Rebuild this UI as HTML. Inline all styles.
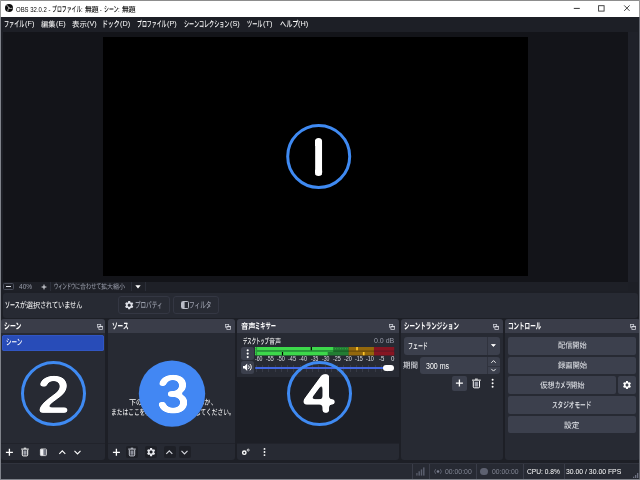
<!DOCTYPE html>
<html lang="ja"><head><meta charset="utf-8"><title>OBS 32.0.2 - プロファイル: 無題 - シーン: 無題</title>
<style>
html,body{margin:0;padding:0;background:#1d1f26;}
body{width:640px;height:480px;position:relative;overflow:hidden;font-family:"Liberation Sans","Noto Sans CJK JP",sans-serif;color:#fefefe;font-size:8px;}
.a{position:absolute;white-space:nowrap;}
.t{position:absolute;white-space:pre;line-height:12px;height:12px;transform-origin:0 50%;text-rendering:geometricPrecision;}
.o{display:inline-block;vertical-align:baseline;height:12px;}
.i{display:inline-block;transform-origin:0 50%;}
svg{position:absolute;overflow:visible;}
#title{left:0;top:0;width:640px;height:16.500px;background:#fff;border-top:1px solid #8d8d8d;box-sizing:border-box;}
#pv{left:3px;top:31.800px;width:625px;height:249.800px;background:#131419;}
#black{left:103.100px;top:37.200px;width:424.700px;height:238.900px;background:#000;}
#vsb{left:628px;top:32px;width:9.5px;height:249.5px;background:#1f2129;}
#hsb{left:3px;top:281.5px;width:625px;height:9px;background:#1e2027;}
#srcbar{left:2.5px;top:292.5px;width:635.5px;height:25.5px;background:#272a33;border-radius:3px;}
.dock{position:absolute;top:319px;height:141px;background:#272a33;border-radius:3px;overflow:hidden;}
.dock .hd{position:absolute;left:0;top:0;right:0;height:14.300px;background:#3a3d49;}
.dock .tb{position:absolute;left:0;right:0;top:124px;height:1px;background:#21232b;}
#status{left:0;top:463px;width:640px;height:17px;background:#272a33;border-top:1px solid #30333d;box-sizing:border-box;}
.btn{position:absolute;background:#3c404d;border-radius:2px;}
.dbtn{position:absolute;background:#282b34;border:1px solid #343743;border-radius:3px;box-sizing:border-box;}
.sep{position:absolute;top:464px;width:1px;height:15px;background:#3a3d49;}
.fl{position:absolute;top:323.5px;width:6px;height:6px;}
.num{font-family:"Liberation Sans",sans-serif;font-weight:400;fill:#fff;stroke:#fff;stroke-linejoin:round;stroke-linecap:round;}
</style></head><body>
<div id="title" class="a"></div>
<!-- OBS logo -->
<svg style="left:5.200px;top:4.100px" width="8" height="8" viewBox="0 0 18 18"><circle cx="9" cy="9" r="9" fill="#0c0c0c"/><g fill="none" stroke="#fff" stroke-width="1.500" stroke-linecap="round"><path d="M4 3.200Q8.500 5 9 9"/><path d="M9 9Q12 11.500 15.800 9.800"/><path d="M9 9Q6 11 6.200 16"/></g></svg>
<!-- window buttons -->
<svg style="left:570px;top:1px" width="70" height="16" viewBox="0 0 70 16"><path d="M3.800 7.400h6" stroke="#333" stroke-width="1" fill="none"/><rect x="28.600" y="4.700" width="5.500" height="5.400" fill="none" stroke="#333" stroke-width=".900"/><path d="M54.200 4.400l5.400 5.500M59.600 4.400l-5.400 5.500" stroke="#333" stroke-width=".900" fill="none"/></svg>

<div id="pv" class="a"></div>
<div id="black" class="a"></div>
<div id="vsb" class="a"></div>
<div id="hsb" class="a"></div>
<!-- zoom bar -->
<div class="a" style="left:3px;top:283px;width:10.5px;height:7px;border:1px solid #4a4e5b;border-radius:1.5px;box-sizing:border-box;"></div>
<div class="a" style="left:6px;top:286.100px;width:4.500px;height:1px;background:#e2e4ea;"></div>
<svg style="left:40.5px;top:283.5px" width="6" height="6" viewBox="0 0 6 6"><path d="M3 .6v4.800M.6 3h4.800" stroke="#e2e4ea" stroke-width="1" fill="none"/></svg>
<div class="a" style="left:49.5px;top:282px;width:1px;height:8.5px;background:#2b2e38;"></div>
<div class="a" style="left:131px;top:282px;width:1px;height:8.5px;background:#2b2e38;"></div>
<div class="a" style="left:144.500px;top:282px;width:1px;height:8.5px;background:#2b2e38;"></div>
<svg style="left:135px;top:284.5px" width="6" height="4" viewBox="0 0 6 4"><path d="M.3 .3h5.400L3 3.600z" fill="#fefefe"/></svg>

<div id="srcbar" class="a"></div>
<div class="dbtn" style="left:118px;top:296px;width:51.5px;height:17.5px;"></div>
<div class="dbtn" style="left:172.500px;top:296px;width:46.5px;height:17.5px;"></div>
<!-- gear (properties) -->
<svg style="left:123.550px;top:299.800px" width="10.400" height="10.400" viewBox="0 0 24 24"><path fill="#dfe1e8" d="M19.140 12.940c.040-.300.060-.610.060-.940s-.020-.640-.070-.940l2.030-1.580a.490.490 0 0 0 .120-.610l-1.920-3.320a.488.488 0 0 0-.590-.220l-2.390.960c-.500-.380-1.030-.700-1.620-.940l-.360-2.540a.484.484 0 0 0-.480-.410h-3.840c-.240 0-.430.170-.470.410l-.360 2.540c-.590.240-1.130.570-1.620.940l-2.390-.960c-.220-.080-.470 0-.590.220L2.740 8.870c-.120.210-.080.470.120.610l2.030 1.580c-.050.300-.090.630-.090.940s.020.640.070.940l-2.030 1.580a.490.490 0 0 0-.120.610l1.920 3.320c.120.220.370.290.590.220l2.390-.960c.500.380 1.030.700 1.620.940l.360 2.540c.050.240.240.410.480.410h3.840c.240 0 .440-.170.470-.410l.360-2.540c.590-.240 1.130-.560 1.620-.940l2.390.960c.220.080.470 0 .590-.220l1.920-3.320c.120-.220.070-.470-.120-.610l-2.010-1.580zM12 15.600c-1.980 0-3.600-1.620-3.600-3.600s1.620-3.600 3.600-3.600 3.600 1.620 3.600 3.600-1.620 3.600-3.600 3.600z"/></svg>
<!-- filter icon -->
<svg style="left:180.500px;top:301px" width="8" height="8" viewBox="0 0 8 8"><rect x=".5" y=".5" width="7" height="7" rx="1" fill="none" stroke="#b9bcc7" stroke-width="1"/><rect x="1" y="1" width="2.600" height="6" fill="#b9bcc7"/></svg>

<!-- docks -->
<div class="dock" id="d1" style="left:1.100px;width:104.400px;"><div class="hd"></div><div class="tb"></div></div>
<div class="dock" id="d2" style="left:108px;width:126.500px;"><div class="hd"></div><div class="tb"></div></div>
<div class="dock" id="d3" style="left:236.500px;width:162.500px;"><div class="hd"></div><div class="a" style="left:0;right:0;top:57.500px;bottom:17px;background:#1d1f26;"></div><div class="tb"></div></div>
<div class="dock" id="d4" style="left:401px;width:101.500px;"><div class="hd"></div></div>
<div class="dock" id="d5" style="left:504.500px;width:135px;"><div class="hd"></div></div>

<!-- float icons -->
<svg class="fl" style="left:96.500px" viewBox="0 0 6 6"><rect x=".400" y=".400" width="3.300" height="2.800" fill="none" stroke="#c9ccd4" stroke-width=".750"/><rect x="1.900" y="2.300" width="3.700" height="3.200" fill="#3a3d49" stroke="#d6d8df" stroke-width=".750"/><path d="M1.900 2.700h3.700" stroke="#e6e7ec" stroke-width="1"/></svg>
<svg class="fl" style="left:225px" viewBox="0 0 6 6"><rect x=".400" y=".400" width="3.300" height="2.800" fill="none" stroke="#c9ccd4" stroke-width=".750"/><rect x="1.900" y="2.300" width="3.700" height="3.200" fill="#3a3d49" stroke="#d6d8df" stroke-width=".750"/><path d="M1.900 2.700h3.700" stroke="#e6e7ec" stroke-width="1"/></svg>
<svg class="fl" style="left:389px" viewBox="0 0 6 6"><rect x=".400" y=".400" width="3.300" height="2.800" fill="none" stroke="#c9ccd4" stroke-width=".750"/><rect x="1.900" y="2.300" width="3.700" height="3.200" fill="#3a3d49" stroke="#d6d8df" stroke-width=".750"/><path d="M1.900 2.700h3.700" stroke="#e6e7ec" stroke-width="1"/></svg>
<svg class="fl" style="left:493px" viewBox="0 0 6 6"><rect x=".400" y=".400" width="3.300" height="2.800" fill="none" stroke="#c9ccd4" stroke-width=".750"/><rect x="1.900" y="2.300" width="3.700" height="3.200" fill="#3a3d49" stroke="#d6d8df" stroke-width=".750"/><path d="M1.900 2.700h3.700" stroke="#e6e7ec" stroke-width="1"/></svg>
<svg class="fl" style="left:630px" viewBox="0 0 6 6"><rect x=".400" y=".400" width="3.300" height="2.800" fill="none" stroke="#c9ccd4" stroke-width=".750"/><rect x="1.900" y="2.300" width="3.700" height="3.200" fill="#3a3d49" stroke="#d6d8df" stroke-width=".750"/><path d="M1.900 2.700h3.700" stroke="#e6e7ec" stroke-width="1"/></svg>

<!-- scene list selected -->
<div class="a" style="left:2.100px;top:334.800px;width:102px;height:16.300px;background:#284cb8;border-radius:2.500px;box-shadow:inset 0 0 0 .800px #3459c6;"></div>

<!-- dock 1 toolbar icons -->
<svg style="left:0;top:444px" width="110" height="17" viewBox="0 0 110 17">
<path d="M9.400 4.800v7M5.900 8.300h7" stroke="#fefefe" stroke-width="1.300" fill="none"/>
<path d="M21.20 5.10h7.6M23.80 4.20h2.4" stroke="#fefefe" stroke-width="1" fill="none"/><path d="M22.30 5.90v5a1 1 0 0 0 1 1h3.4a1 1 0 0 0 1-1v-5" fill="none" stroke="#fefefe" stroke-width="1"/><rect x="23.50" y="6.50" width="3" height="4.2" fill="#9a9da8"/>
<rect x="40.400" y="5" width="6" height="6.600" rx=".8" fill="none" stroke="#fefefe" stroke-width=".800"/><rect x="40.600" y="5.200" width="2.600" height="6.200" fill="#f0f1f4"/><rect x="43.200" y="5.400" width="1.400" height="5.800" fill="#b4b7c0"/><rect x="44.600" y="5.400" width="1.400" height="5.800" fill="#6e7180"/>
<path d="M59.300 9.800l3-3 3 3" stroke="#fefefe" stroke-width="1.100" fill="none"/>
<path d="M74.500 6.900l3 3 3-3" stroke="#fefefe" stroke-width="1.100" fill="none"/>
</svg>

<!-- dock 2 toolbar icons -->
<div class="a" style="left:126px;top:446.200px;width:12px;height:11.400px;background:#1e2027;border-radius:2px;"></div>
<div class="a" style="left:144.8px;top:446.200px;width:12px;height:11.400px;background:#1e2027;border-radius:2px;"></div>
<div class="a" style="left:163.5px;top:446.200px;width:12px;height:11.400px;background:#1e2027;border-radius:2px;"></div>
<div class="a" style="left:178.7px;top:446.200px;width:12px;height:11.400px;background:#1e2027;border-radius:2px;"></div>
<svg style="left:107px;top:444px" width="110" height="17" viewBox="0 0 110 17">
<path d="M9.400 4.800v7M5.900 8.300h7" stroke="#fefefe" stroke-width="1.300" fill="none"/>
<path d="M21.20 5.10h7.6M23.80 4.20h2.4" stroke="#c9ccd5" stroke-width="1" fill="none"/><path d="M22.30 5.90v5a1 1 0 0 0 1 1h3.4a1 1 0 0 0 1-1v-5" fill="none" stroke="#c9ccd5" stroke-width="1"/><rect x="23.50" y="6.50" width="3" height="4.2" fill="#8b8e99"/>
<path d="M59.300 9.800l3-3 3 3" stroke="#d6d8df" stroke-width="1.100" fill="none"/>
<path d="M74.500 6.900l3 3 3-3" stroke="#d6d8df" stroke-width="1.100" fill="none"/>
</svg>
<svg style="left:145.800px;top:446.800px" width="10.200" height="10.200" viewBox="0 0 24 24"><path fill="#e8e9ee" d="M19.140 12.940c.040-.300.060-.610.060-.940s-.020-.640-.070-.940l2.030-1.580a.490.490 0 0 0 .120-.610l-1.920-3.320a.488.488 0 0 0-.590-.220l-2.390.960c-.500-.380-1.030-.700-1.620-.940l-.360-2.540a.484.484 0 0 0-.480-.410h-3.840c-.240 0-.430.170-.470.410l-.360 2.540c-.590.240-1.130.570-1.620.940l-2.390-.960c-.220-.080-.470 0-.590.220L2.740 8.870c-.120.210-.080.470.120.610l2.030 1.580c-.050.300-.090.630-.090.940s.020.640.070.940l-2.030 1.580a.490.490 0 0 0-.120.610l1.920 3.320c.120.220.370.290.590.220l2.390-.960c.500.380 1.030.700 1.620.940l.360 2.540c.050.240.240.410.480.410h3.840c.240 0 .440-.170.470-.410l.360-2.540c.590-.240 1.130-.560 1.620-.940l2.390.960c.220.080.470 0 .590-.220l1.920-3.320c.120-.220.070-.470-.120-.610l-2.010-1.580zM12 15.600c-1.980 0-3.600-1.620-3.600-3.600s1.620-3.600 3.600-3.600 3.600 1.620 3.600 3.600-1.620 3.600-3.600 3.600z"/></svg>


<!-- mixer -->
<div class="btn" style="left:240.900px;top:346.700px;width:13.100px;height:13.300px;border-radius:2.500px;"></div>
<div class="btn" style="left:240.900px;top:361.400px;width:13.100px;height:12.900px;border-radius:2.500px;"></div>
<svg style="left:240.900px;top:346.700px" width="13.100" height="13.300" viewBox="0 0 13.100 13.300"><circle cx="6.700" cy="3.200" r="1.050" fill="#fefefe"/><circle cx="6.700" cy="6.600" r="1.050" fill="#fefefe"/><circle cx="6.700" cy="10.100" r="1.050" fill="#fefefe"/></svg>
<svg style="left:240.900px;top:361.400px" width="13.100" height="12.900" viewBox="0 0 13.100 12.900"><path d="M2 4.900h1.700l2.500-2.400v7.500l-2.500-2.400H2z" fill="#fefefe"/><path d="M7.400 4.400a2.500 2.500 0 0 1 0 3.600M8.900 3a4.400 4.400 0 0 1 0 6.400" stroke="#fefefe" stroke-width=".950" fill="none"/></svg>
<!-- meter -->
<svg style="left:254.800px;top:346.650px" width="139.200" height="8.300" viewBox="0 0 139.200 8.300">
<rect x="0" y="0" width="93.700" height="8.300" fill="#1b6529"/><rect x="93.700" y="0" width="25.300" height="8.300" fill="#75520a"/><rect x="119" y="0" width="20.200" height="8.300" fill="#6c1624"/>
<rect x="0" y="0" width="93.700" height="3.300" fill="#227d33"/><rect x="93.700" y="0" width="25.300" height="3.300" fill="#94680c"/><rect x="119" y="0" width="20.200" height="3.300" fill="#861522"/>
<rect x="0" y="5" width="93.700" height="3.300" fill="#227d33"/><rect x="93.700" y="5" width="25.300" height="3.300" fill="#94680c"/><rect x="119" y="5" width="20.200" height="3.300" fill="#861522"/>
<rect x="2" y="0" width="76.200" height="3.300" fill="#3dd84b"/><rect x="2" y="5" width="70.700" height="3.300" fill="#3dd84b"/>
<rect x="2" y="3.300" width="76.200" height="1.700" fill="#2a9c3c"/>
<rect x="55.700" y="0" width="1.200" height="3.300" fill="#000"/><rect x="26.900" y="5" width="1.200" height="3.300" fill="#000"/>
<rect x="101.200" y="0" width="1.700" height="3.300" fill="#ffc62a"/><rect x="107.900" y="5" width="1.700" height="3.300" fill="#ffc62a"/>
<path d="M80 1.700h13" stroke="#4be05a" stroke-width=".600" stroke-dasharray=".800 1.700"/>
<rect x="0" y="0" width="2" height="8.300" fill="#2a9c3c"/><path d="M.500 0v8.300" stroke="#3dd84b" stroke-width="1" stroke-dasharray="1.400 .800"/>
</svg>
<!-- slider -->
<div class="a" style="left:256px;top:365px;width:132px;height:6.600px;background:repeating-linear-gradient(90deg,#383b46 0,#383b46 .800px,transparent .800px,transparent 6.250px);"></div>
<div class="a" style="left:254.800px;top:367.150px;width:135px;height:2.300px;background:#4166e0;border-radius:1px;"></div>
<div class="a" style="left:383px;top:365.300px;width:11px;height:6px;background:#fefefe;border-radius:3px;"></div>
<!-- mixer toolbar -->
<svg style="left:236.500px;top:444px" width="40" height="17" viewBox="0 0 40 17">
<circle cx="7.300" cy="8.700" r="1.700" fill="none" stroke="#fefefe" stroke-width="1.400"/><circle cx="11.200" cy="6.100" r="1" fill="none" stroke="#fefefe" stroke-width=".800"/>
<circle cx="27.500" cy="4.900" r=".950" fill="#fefefe"/><circle cx="27.500" cy="8" r=".950" fill="#fefefe"/><circle cx="27.500" cy="11.100" r=".950" fill="#fefefe"/></svg>

<!-- transitions -->
<div class="btn" style="left:403.500px;top:337px;width:96.500px;height:17.500px;border-radius:3px;"></div>
<div class="a" style="left:486.500px;top:337px;width:1px;height:17.500px;background:#30333e;"></div>
<svg style="left:490.900px;top:344.300px" width="4.800" height="3" viewBox="0 0 4.800 3"><path d="M.500 .500h3.800L2.400 2.500z" fill="#fefefe" stroke="#fefefe" stroke-width=".800" stroke-linejoin="round"/></svg>
<div class="btn" style="left:420px;top:357.300px;width:80px;height:17px;border-radius:3px;"></div>
<div class="a" style="left:486.500px;top:357.300px;width:1px;height:17px;background:#30333e;"></div>
<div class="a" style="left:486.500px;top:365.500px;width:13.500px;height:1px;background:#30333e;"></div>
<svg style="left:490px;top:359px" width="7" height="14" viewBox="0 0 7 14"><path d="M1.300 3.800l2.200-2.200 2.200 2.200M1.300 9.900l2.200 2.200 2.200-2.200" stroke="#fefefe" stroke-width=".900" fill="none"/></svg>
<div class="btn" style="left:452.300px;top:376px;width:14.600px;height:14.600px;"></div>
<svg style="left:450px;top:375px" width="52" height="17" viewBox="0 0 52 17">
<path d="M9.400 4.600v7M5.900 8.100h7" stroke="#fefefe" stroke-width="1.300" fill="none"/>
<path d="M22.03 5.15h8.74M25.02 4.12h2.76" stroke="#fefefe" stroke-width="1" fill="none"/><path d="M23.29 6.07v5.75a1 1 0 0 0 1 1h4.21a1 1 0 0 0 1-1v-5.75" fill="none" stroke="#fefefe" stroke-width="1"/><rect x="24.67" y="6.76" width="3.45" height="4.83" fill="#9a9da8"/>
<circle cx="42.600" cy="4.700" r="1" fill="#fefefe"/><circle cx="42.600" cy="8.200" r="1" fill="#fefefe"/><circle cx="42.600" cy="11.700" r="1" fill="#fefefe"/></svg>

<!-- controls -->
<div class="btn" style="left:508.300px;top:337.00px;width:127.800px;height:17.550px;"></div>
<div class="btn" style="left:508.300px;top:356.70px;width:127.800px;height:17.550px;"></div>
<div class="btn" style="left:508.300px;top:376.40px;width:107.400px;height:17.500px;"></div>
<div class="btn" style="left:618px;top:376.40px;width:18.100px;height:17.500px;"></div>
<div class="btn" style="left:508.300px;top:396.10px;width:127.800px;height:17.550px;"></div>
<div class="btn" style="left:508.300px;top:415.80px;width:127.800px;height:17.550px;"></div>
<svg style="left:621.900px;top:380px" width="10" height="10" viewBox="0 0 24 24"><path fill="#fefefe" d="M19.140 12.940c.040-.300.060-.610.060-.940s-.020-.640-.070-.940l2.030-1.580a.490.490 0 0 0 .120-.610l-1.920-3.320a.488.488 0 0 0-.590-.220l-2.390.960c-.500-.380-1.030-.700-1.620-.940l-.360-2.540a.484.484 0 0 0-.480-.410h-3.840c-.240 0-.430.170-.470.410l-.360 2.540c-.590.240-1.130.570-1.620.940l-2.390-.960c-.220-.080-.470 0-.590.220L2.740 8.870c-.120.210-.080.470.120.610l2.030 1.580c-.050.300-.090.630-.090.940s.020.640.070.940l-2.030 1.580a.490.490 0 0 0-.120.610l1.920 3.320c.120.220.370.290.590.220l2.390-.960c.500.380 1.030.700 1.620.940l.360 2.540c.050.240.240.410.480.410h3.840c.240 0 .440-.170.470-.410l.360-2.540c.590-.240 1.130-.560 1.620-.940l2.390.960c.220.080.470 0 .590-.220l1.920-3.320c.120-.220.070-.470-.120-.610l-2.010-1.580zM12 15.600c-1.980 0-3.600-1.620-3.600-3.600s1.620-3.600 3.600-3.600 3.600 1.620 3.600 3.600-1.620 3.600-3.600 3.600z"/></svg>

<!-- status bar -->
<div id="status" class="a"></div>
<div class="sep" style="left:412px"></div><div class="sep" style="left:429px"></div><div class="sep" style="left:476px"></div><div class="sep" style="left:522.500px"></div><div class="sep" style="left:563.500px"></div>
<svg style="left:415.500px;top:466.500px" width="9" height="9" viewBox="0 0 9 9"><rect x=".2" y="6" width="1.400" height="2.600" fill="#555864"/><rect x="2.500" y="4.300" width="1.400" height="4.300" fill="#5d6170"/><rect x="4.800" y="2.400" width="1.400" height="6.200" fill="#5d6170"/><rect x="7.100" y=".4" width="1.400" height="8.200" fill="#5d6170"/></svg>
<svg style="left:433.500px;top:467.500px" width="8" height="7" viewBox="0 0 8 7"><circle cx="4" cy="3.500" r="1.300" fill="#7c8090"/><path d="M1.700 1.200a3.300 3.300 0 0 0 0 4.600M6.300 1.200a3.300 3.300 0 0 1 0 4.600" stroke="#6c7080" stroke-width=".800" fill="none"/></svg>
<div class="a" style="left:480.300px;top:467.500px;width:7.400px;height:7.400px;border-radius:50%;background:#5d6170;"></div>
<svg style="left:632.500px;top:473px" width="6" height="6" viewBox="0 0 6 6"><rect x="4" y="0" width="1.300" height="5" fill="#6c7080"/><rect x="2" y="2" width="1.300" height="3" fill="#6c7080"/><rect x="0" y="3.700" width="1.300" height="1.300" fill="#6c7080"/></svg>

<!-- window border -->
<div class="a" style="left:0;top:16.500px;width:1px;height:463.500px;background:#80838b;"></div>
<div class="a" style="left:638.700px;top:16.500px;width:1.300px;height:463.500px;background:#62656d;"></div>
<div class="a" style="left:0;top:479px;width:640px;height:1px;background:#80838b;"></div>
<div class="a" style="left:0;top:0;width:1px;height:17px;background:#9a9a9a;"></div>
<div class="a" style="left:639px;top:0;width:1px;height:17px;background:#9a9a9a;"></div>

<div class="t" aria-label="OBS 32.0.2 - プロファイル: 無題 - シーン: 無題" style="left:16.04px;top:3.84px;color:#0a0a0a;"><span class="o" style="width:36.13px"><span class="i" style="font-size:6.64px;text-rendering:auto;transform:scaleX(0.9000)">OBS 32.0.2 - </span></span><span class="o" style="width:29.30px"><span class="i" style="font-size:8.0px;font-weight:500;transform:scaleX(0.6104)">プロファイル</span></span><span class="o" style="width:3.32px"><span class="i" style="font-size:6.64px;text-rendering:auto;transform:scaleX(0.9000)">: </span></span><span class="o" style="width:13.73px"><span class="i" style="font-size:7.36px;font-weight:500;transform:scaleX(0.9330)">無題</span></span><span class="o" style="width:5.30px"><span class="i" style="font-size:6.64px;text-rendering:auto;transform:scaleX(0.9000)"> - </span></span><span class="o" style="width:14.41px"><span class="i" style="font-size:8.0px;font-weight:500;transform:scaleX(0.6104)">シーン</span></span><span class="o" style="width:3.32px"><span class="i" style="font-size:6.64px;text-rendering:auto;transform:scaleX(0.9000)">: </span></span><span class="o" style="width:13.73px"><span class="i" style="font-size:7.36px;font-weight:500;transform:scaleX(0.9330)">無題</span></span></div>
<div class="t" aria-label="ファイル(F)" style="left:4.47px;top:17.64px;color:#fefefe;"><span class="o" style="width:20.39px"><span class="i" style="font-size:8.5px;font-weight:500;transform:scaleX(0.5994)">ファイル</span></span><span class="o" style="vertical-align:1px;width:9.32px"><span class="i" style="font-size:6.63px;text-rendering:auto;transform:scaleX(1.1000)">(F)</span></span></div>
<div class="t" aria-label="編集(E)" style="left:41.46px;top:17.64px;color:#fefefe;"><span class="o" style="width:14.43px"><span class="i" style="font-size:7.82px;transform:scaleX(0.9234)">編集</span></span><span class="o" style="vertical-align:1px;width:9.73px"><span class="i" style="font-size:6.63px;text-rendering:auto;transform:scaleX(1.1000)">(E)</span></span></div>
<div class="t" aria-label="表示(V)" style="left:72.21px;top:17.64px;color:#fefefe;"><span class="o" style="width:14.86px"><span class="i" style="font-size:7.82px;transform:scaleX(0.9511)">表示</span></span><span class="o" style="vertical-align:1px;width:9.73px"><span class="i" style="font-size:6.63px;text-rendering:auto;transform:scaleX(1.1000)">(V)</span></span></div>
<div class="t" aria-label="ドック(D)" style="left:101.95px;top:17.64px;color:#fefefe;"><span class="o" style="width:17.63px"><span class="i" style="font-size:8.5px;font-weight:500;transform:scaleX(0.6910)">ドック</span></span><span class="o" style="vertical-align:1px;width:10.12px"><span class="i" style="font-size:6.63px;text-rendering:auto;transform:scaleX(1.1000)">(D)</span></span></div>
<div class="t" aria-label="プロファイル(P)" style="left:137.00px;top:17.64px;color:#fefefe;"><span class="o" style="width:29.52px"><span class="i" style="font-size:8.5px;font-weight:500;transform:scaleX(0.5787)">プロファイル</span></span><span class="o" style="vertical-align:1px;width:9.73px"><span class="i" style="font-size:6.63px;text-rendering:auto;transform:scaleX(1.1000)">(P)</span></span></div>
<div class="t" aria-label="シーンコレクション(S)" style="left:184.44px;top:17.64px;color:#fefefe;"><span class="o" style="width:45.41px"><span class="i" style="font-size:8.5px;font-weight:500;transform:scaleX(0.5968)">シーンコレクション</span></span><span class="o" style="vertical-align:1px;width:9.73px"><span class="i" style="font-size:6.63px;text-rendering:auto;transform:scaleX(1.1000)">(S)</span></span></div>
<div class="t" aria-label="ツール(T)" style="left:247.44px;top:17.64px;color:#fefefe;"><span class="o" style="width:15.49px"><span class="i" style="font-size:8.5px;font-weight:500;transform:scaleX(0.6070)">ツール</span></span><span class="o" style="vertical-align:1px;width:9.32px"><span class="i" style="font-size:6.63px;text-rendering:auto;transform:scaleX(1.1000)">(T)</span></span></div>
<div class="t" aria-label="ヘルプ(H)" style="left:279.65px;top:17.64px;color:#fefefe;"><span class="o" style="width:18.45px"><span class="i" style="font-size:8.5px;font-weight:500;transform:scaleX(0.7230)">ヘルプ</span></span><span class="o" style="vertical-align:1px;width:10.12px"><span class="i" style="font-size:6.63px;text-rendering:auto;transform:scaleX(1.1000)">(H)</span></span></div>
<div class="t" style="left:19.00px;top:280.50px;font-size:7px;color:#9a9eab;text-rendering:auto;transform:scaleX(0.9326);">40%</div>
<div class="t" aria-label="ウィンドウに合わせて拡大縮小" style="left:53.60px;top:281.20px;color:#9a9eab;"><span class="o" style="width:21.25px"><span class="i" style="font-size:7.6px;font-weight:500;transform:scaleX(0.5597)">ウィンドウ</span></span><span class="o" style="width:5.16px"><span class="i" style="font-size:7.6px;transform:scaleX(0.6801)">に</span></span><span class="o" style="width:5.99px"><span class="i" style="font-size:6.99px;transform:scaleX(0.8555)">合</span></span><span class="o" style="width:15.49px"><span class="i" style="font-size:7.6px;transform:scaleX(0.6801)">わせて</span></span><span class="o" style="width:23.91px"><span class="i" style="font-size:6.99px;transform:scaleX(0.8555)">拡大縮小</span></span></div>
<div class="t" aria-label="ソースが選択されていません" style="left:4.82px;top:299.06px;color:#fefefe;"><span class="o" style="width:14.79px"><span class="i" style="font-size:8.5px;font-weight:500;transform:scaleX(0.5898)">ソース</span></span><span class="o" style="width:6.10px"><span class="i" style="font-size:8.5px;transform:scaleX(0.7168)">が</span></span><span class="o" style="width:14.09px"><span class="i" style="font-size:7.82px;transform:scaleX(0.9016)">選択</span></span><span class="o" style="width:42.29px"><span class="i" style="font-size:8.5px;transform:scaleX(0.7168)">されていません</span></span></div>
<div class="t" style="left:134.58px;top:299.26px;font-size:8.5px;color:#9a9eab;font-weight:500;transform:scaleX(0.6542);">プロパティ</div>
<div class="t" style="left:188.72px;top:299.15px;font-size:8.5px;color:#9a9eab;font-weight:500;transform:scaleX(0.6648);">フィルタ</div>
<div class="t" style="left:4.25px;top:319.70px;font-size:8.5px;color:#fefefe;font-weight:700;transform:scaleX(0.6945);">シーン</div>
<div class="t" style="left:6.20px;top:336.38px;font-size:8.5px;color:#fefefe;font-weight:500;transform:scaleX(0.6522);">シーン</div>
<div class="t" style="left:112.27px;top:319.70px;font-size:8.5px;color:#fefefe;font-weight:700;transform:scaleX(0.6603);">ソース</div>
<div class="t" aria-label="音声ミキサー" style="left:240.56px;top:319.70px;color:#fefefe;font-weight:700;"><span class="o" style="width:14.65px"><span class="i" style="font-size:7.82px;transform:scaleX(0.9373)">音声</span></span><span class="o" style="width:20.86px"><span class="i" style="font-size:8.5px;transform:scaleX(0.6132)">ミキサー</span></span></div>
<div class="t" style="left:404.48px;top:319.70px;font-size:8.5px;color:#fefefe;font-weight:700;transform:scaleX(0.6492);">シーントランジション</div>
<div class="t" style="left:508.27px;top:319.70px;font-size:8.5px;color:#fefefe;font-weight:700;transform:scaleX(0.6514);">コントロール</div>
<div class="t" aria-label="下の + ボタンをクリックするか、" style="left:129.38px;top:396.50px;color:#fefefe;"><span class="o" style="width:7.12px"><span class="i" style="font-size:7.36px;transform:scaleX(0.9679)">下</span></span><span class="o" style="width:6.16px"><span class="i" style="font-size:8.0px;transform:scaleX(0.7696)">の</span></span><span class="o" style="width:7.82px"><span class="i" style="font-size:6.24px;text-rendering:auto;transform:scaleX(1.1000)"> + </span></span><span class="o" style="width:15.20px"><span class="i" style="font-size:8.0px;font-weight:500;transform:scaleX(0.6333)">ボタン</span></span><span class="o" style="width:6.16px"><span class="i" style="font-size:8.0px;transform:scaleX(0.7696)">を</span></span><span class="o" style="width:20.26px"><span class="i" style="font-size:8.0px;font-weight:500;transform:scaleX(0.6333)">クリック</span></span><span class="o" style="width:18.47px"><span class="i" style="font-size:8.0px;transform:scaleX(0.7696)">するか</span></span><span class="o" style="width:5.28px"><span class="i" style="font-size:8.0px;transform:scaleX(0.6596)">、</span></span></div>
<div class="t" aria-label="またはここを右クリックして追加してください。" style="left:110.72px;top:406.60px;color:#fefefe;"><span class="o" style="width:34.33px"><span class="i" style="font-size:8.0px;transform:scaleX(0.7152)">またはここを</span></span><span class="o" style="width:6.62px"><span class="i" style="font-size:7.36px;transform:scaleX(0.8996)">右</span></span><span class="o" style="width:18.83px"><span class="i" style="font-size:8.0px;font-weight:500;transform:scaleX(0.5885)">クリック</span></span><span class="o" style="width:11.28px"><span class="i" style="font-size:8.0px;transform:scaleX(0.7152)">して</span></span><span class="o" style="width:13.24px"><span class="i" style="font-size:7.36px;transform:scaleX(0.8996)">追加</span></span><span class="o" style="width:34.00px"><span class="i" style="font-size:8.0px;transform:scaleX(0.7152)">してください</span></span><span class="o" style="width:4.90px"><span class="i" style="font-size:8.0px;transform:scaleX(0.6130)">。</span></span></div>
<div class="t" aria-label="デスクトップ音声" style="left:242.81px;top:335.84px;color:#fefefe;"><span class="o" style="width:25.88px"><span class="i" style="font-size:8.0px;font-weight:500;transform:scaleX(0.5391)">デスクトップ</span></span><span class="o" style="width:12.13px"><span class="i" style="font-size:7.36px;transform:scaleX(0.8241)">音声</span></span></div>
<div class="t" style="left:373.72px;top:335.48px;font-size:8px;color:#9a9eab;text-rendering:auto;transform:scaleX(0.8778);">0.0 dB</div>
<div class="t" style="left:407.85px;top:339.60px;font-size:8.5px;color:#fefefe;font-weight:500;transform:scaleX(0.5809);">フェード</div>
<div class="t" style="left:403.47px;top:360.35px;font-size:7.82px;color:#e6e8ed;transform:scaleX(0.9554);">期間</div>
<div class="t" style="left:426.00px;top:359.90px;font-size:8.5px;color:#fefefe;text-rendering:auto;transform:scaleX(0.8251);">300 ms</div>
<div class="t" style="left:558.00px;top:339.60px;font-size:7.82px;color:#e6e8ed;transform:scaleX(0.9184);">配信開始</div>
<div class="t" style="left:557.71px;top:360.43px;font-size:7.82px;color:#e6e8ed;transform:scaleX(0.9329);">録画開始</div>
<div class="t" aria-label="仮想カメラ開始" style="left:539.95px;top:379.04px;color:#e6e8ed;"><span class="o" style="width:14.68px"><span class="i" style="font-size:7.82px;transform:scaleX(0.9396)">仮想</span></span><span class="o" style="width:15.68px"><span class="i" style="font-size:8.5px;font-weight:500;transform:scaleX(0.6147)">カメラ</span></span><span class="o" style="width:14.68px"><span class="i" style="font-size:7.82px;transform:scaleX(0.9396)">開始</span></span></div>
<div class="t" style="left:552.37px;top:399.00px;font-size:8.5px;color:#e6e8ed;font-weight:500;transform:scaleX(0.6608);">スタジオモード</div>
<div class="t" style="left:564.12px;top:419.80px;font-size:7.82px;color:#e6e8ed;transform:scaleX(0.9771);">設定</div>
<div class="t" style="left:445.07px;top:465.74px;font-size:7.5px;color:#828694;text-rendering:auto;transform:scaleX(0.9149);">00:00:00</div>
<div class="t" style="left:492.00px;top:465.74px;font-size:7.5px;color:#828694;text-rendering:auto;transform:scaleX(0.9074);">00:00:00</div>
<div class="t" style="left:526.71px;top:465.74px;font-size:7.5px;color:#fefefe;text-rendering:auto;transform:scaleX(0.8838);">CPU: 0.8%</div>
<div class="t" style="left:566.29px;top:465.74px;font-size:7.5px;color:#fefefe;text-rendering:auto;transform:scaleX(0.9136);">30.00 / 30.00 FPS</div>
<div class="t" style="left:255.01px;top:352.73px;font-size:7.2px;color:#dcdee4;text-rendering:auto;transform:scaleX(0.7212);">-60</div>
<div class="t" style="left:266.24px;top:352.73px;font-size:7.2px;color:#dcdee4;text-rendering:auto;transform:scaleX(0.7476);">-55</div>
<div class="t" style="left:277.00px;top:352.73px;font-size:7.2px;color:#dcdee4;text-rendering:auto;transform:scaleX(0.7628);">-50</div>
<div class="t" style="left:288.46px;top:352.73px;font-size:7.2px;color:#dcdee4;text-rendering:auto;transform:scaleX(0.7648);">-45</div>
<div class="t" style="left:299.31px;top:352.73px;font-size:7.2px;color:#dcdee4;text-rendering:auto;transform:scaleX(0.7671);">-40</div>
<div class="t" style="left:311.00px;top:352.73px;font-size:7.2px;color:#dcdee4;text-rendering:auto;transform:scaleX(0.6929);">-35</div>
<div class="t" style="left:321.94px;top:352.73px;font-size:7.2px;color:#dcdee4;text-rendering:auto;transform:scaleX(0.7212);">-30</div>
<div class="t" style="left:333.14px;top:352.73px;font-size:7.2px;color:#dcdee4;text-rendering:auto;transform:scaleX(0.7476);">-25</div>
<div class="t" style="left:343.83px;top:352.73px;font-size:7.2px;color:#dcdee4;text-rendering:auto;transform:scaleX(0.7628);">-20</div>
<div class="t" style="left:355.33px;top:352.73px;font-size:7.2px;color:#dcdee4;text-rendering:auto;transform:scaleX(0.7542);">-15</div>
<div class="t" style="left:366.40px;top:352.73px;font-size:7.2px;color:#dcdee4;text-rendering:auto;transform:scaleX(0.7628);">-10</div>
<div class="t" style="left:378.69px;top:352.73px;font-size:7.2px;color:#dcdee4;text-rendering:auto;transform:scaleX(0.8342);">-5</div>
<div class="t" style="left:390.93px;top:352.73px;font-size:7.2px;color:#dcdee4;text-rendering:auto;transform:scaleX(0.8466);">0</div>
<!-- annotation circles -->
<svg style="left:0;top:0" width="640" height="480" viewBox="0 0 640 480">
<defs><filter id="rnd" x="-20%" y="-20%" width="140%" height="140%"><feGaussianBlur stdDeviation="1.600"/><feComponentTransfer><feFuncA type="linear" slope="5" intercept="-2"/></feComponentTransfer></filter>
<clipPath id="c1"><rect x="315" y="138.100" width="7.100" height="37.900" rx="3.550"/></clipPath></defs>
<circle cx="318.700" cy="156.400" r="31" fill="none" stroke="#3f8af2" stroke-width="3"/>
<circle cx="53.500" cy="393.500" r="31" fill="none" stroke="#3f8af2" stroke-width="3"/>
<circle cx="172" cy="393.600" r="33.200" fill="#4287f3"/>
<circle cx="319.500" cy="393.600" r="31" fill="none" stroke="#3f8af2" stroke-width="3"/>
<g clip-path="url(#c1)"><text class="num" x="317.750" y="174.700" font-size="52.500" stroke-width="2.500" text-anchor="middle">1</text></g>
<text class="num" filter="url(#rnd)" transform="translate(53.400,411.900) scale(1.147,1)" font-size="50.100" stroke-width="1.500" text-anchor="middle">2</text>
<text class="num" filter="url(#rnd)" transform="translate(172.890,411.600) scale(1.116,1)" font-size="51.360" stroke-width="1.500" text-anchor="middle">3</text>
<text class="num" filter="url(#rnd)" transform="translate(319.290,411.850) scale(1.110,1)" font-size="52.880" stroke-width="1.500" text-anchor="middle">4</text>
</svg>
</body></html>
